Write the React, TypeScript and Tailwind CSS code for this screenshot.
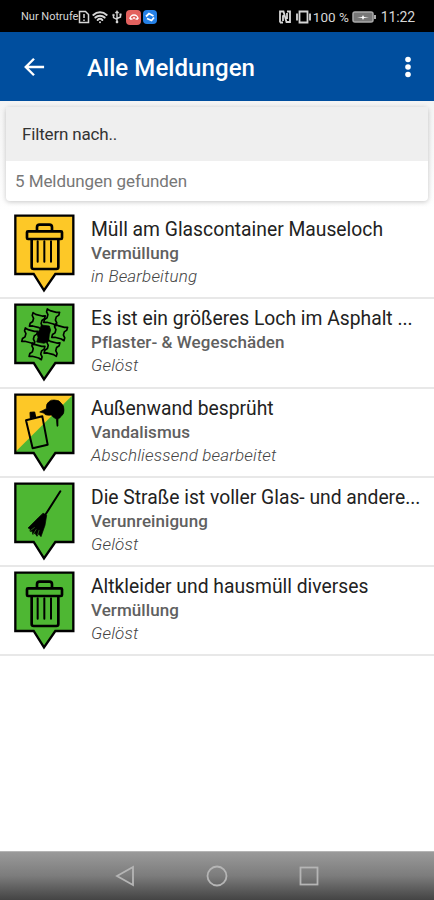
import React from 'react';
import { Wifi } from 'lucide-react';

type IconName = 'bin' | 'paving' | 'spray' | 'broom';
type Status = 'open' | 'done' | 'closing';

interface Report {
  title: string;
  category: string;
  state: string;
  icon: IconName;
  status: Status;
}

const reports: Report[] = [
  { title: 'Müll am Glascontainer Mauseloch', category: 'Vermüllung', state: 'in Bearbeitung', icon: 'bin', status: 'open' },
  { title: 'Es ist ein größeres Loch im Asphalt ...', category: 'Pflaster- & Wegeschäden', state: 'Gelöst', icon: 'paving', status: 'done' },
  { title: 'Außenwand besprüht', category: 'Vandalismus', state: 'Abschliessend bearbeitet', icon: 'spray', status: 'closing' },
  { title: 'Die Straße ist voller Glas- und andere...', category: 'Verunreinigung', state: 'Gelöst', icon: 'broom', status: 'done' },
  { title: 'Altkleider und hausmüll diverses', category: 'Vermüllung', state: 'Gelöst', icon: 'bin', status: 'done' },
];

const YELLOW = '#fdc827';
const GREEN = '#4eb733';

const Bin: React.FC = () => (
  <g fill="none" stroke="#000" strokeLinejoin="round" strokeLinecap="round">
    <path d="M111 75V67q0-8 8-8h29q8 0 8 8v8" strokeWidth="8" />
    <rect x="81" y="79" width="105" height="23" rx="3" strokeWidth="8" />
    <path d="M95 104v82q0 6 6 6h68q6 0 6-6v-82" strokeWidth="8" />
    <path d="M113 109v61M133 109v61M153 109v61" strokeWidth="6" />
  </g>
);

const stones = [
  [155, 70],
  [112, 81],
  [179, 115],
  [89, 127],
  [156, 162],
  [111, 172],
];

const Paving: React.FC = () => (
  <g stroke="#000" strokeWidth="5" strokeLinejoin="round">
    <path d="M124 93l24 3 4 12-4 14-2 20-14 6-22-4 4-14-3-11 9-14z" fill="#000" strokeWidth="2" />
    {stones.map(([x, y]) => (
      <path
        key={`${x}-${y}`}
        transform={`translate(${x} ${y}) rotate(15)`}
        d="M-19-21L-10-18H10L19-21V-12L13-5V5L19 12V21L10 18H-10L-19 21V12L-13 5V-5L-19-12z"
        fill="none"
      />
    ))}
  </g>
);

const Spray: React.FC = () => (
  <g stroke="#000" strokeLinejoin="round">
    <path d="M78 109l49-12 16 85-45 11z" fill="none" strokeWidth="6" />
    <path d="M91 103l-1-18 14-1 3 15z" strokeWidth="3" />
    <path
      d="M119 84l20-10q-1-16 8-21 5-6 16-5 16 0 20 9 10 8 9 21 1 12-8 18-5 8-10 9l0 21-3 1-2-22q-10-4-15-12-18 3-23-6z"
      strokeWidth="2"
    />
  </g>
);

const Broom: React.FC = () => (
  <g stroke="#000" strokeLinecap="round" strokeLinejoin="round">
    <path d="M181 55l-46 72" strokeWidth="6" />
    <path d="M130 121l10 6-5 30-12 34-7-8-5 7-6-9-7 3-1-9-7 0 0-8-6-2 30-30z" strokeWidth="2" />
    <path d="M103 164l-11 8M108 170l-8 13M117 172l-4 13" stroke={GREEN} strokeWidth="1.5" />
  </g>
);

const drawings: Record<IconName, React.FC> = { bin: Bin, paving: Paving, spray: Spray, broom: Broom };

const Marker: React.FC<{ icon: IconName; status: Status }> = ({ icon, status }) => {
  const Drawing = drawings[icon];
  const outline = 'M46 32H220V207H166L132 256 101 207H46Z';

  return (
    <svg viewBox="42 27 183 240" className="h-20 w-[61px] shrink-0">
      <path d={outline} fill={status === 'open' ? YELLOW : GREEN} />
      {status === 'closing' && <path d="M46 32H219L46 204Z" fill={YELLOW} />}
      <path d={outline} fill="none" stroke="#000" strokeWidth="7" />
      <Drawing />
    </svg>
  );
};

const StatusBar: React.FC = () => (
  <div className="flex h-8 shrink-0 items-center justify-between bg-black pt-0.5 pr-[19px] pl-[21px] text-[#d6d6d6]">
    <div className="flex items-center">
      <span className="text-[11px]">Nur Notrufe</span>
      <svg viewBox="0 0 12 14" className="h-3.5 w-3" fill="none" stroke="currentColor" strokeWidth="1.5">
        <path d="M1.5 1.5h6l3 3v8h-9zM6 4v4M6 9.500v1.500" />
      </svg>
      <Wifi className="ml-0.5 size-4" strokeWidth={3} />
      <svg viewBox="0 0 12 14" className="ml-[3px] h-3.5 w-3" fill="none" stroke="currentColor" strokeWidth="1.4">
        <path d="M6 2v9M2.500 5v2.500L6 9.500M9.500 4.500V7L6 8.500" />
        <path d="M6 .5 8 3H4zM5 11h2v2H5zM1.700 4.200h1.600v1.600H1.700zM8.700 3.700h1.600v1.600H8.700z" fill="currentColor" strokeWidth=".4" />
      </svg>
      <span className="ml-[3px] flex size-[15px] items-center justify-center rounded bg-[#e3625f]">
        <svg viewBox="0 0 12 12" className="size-3" fill="none" stroke="#fff" strokeWidth="1.500">
          <path d="M2 8a4 4 0 1 1 8 0M2 8h2.500M7.500 8H10M6 6v2" />
        </svg>
      </span>
      <span className="ml-0.5 flex size-3.5 items-center justify-center rounded bg-[#2580e6]">
        <svg viewBox="0 0 12 12" className="size-3" fill="none" stroke="#fff" strokeWidth="1.800">
          <path d="M2 5.500 5 2.500l4.500 2.500M10 6.500 7.500 9.500 3 7.500" />
        </svg>
      </span>
    </div>
    <div className="flex items-center">
      <svg viewBox="0 0 14 14" className="h-3.5 w-3.5" fill="none" stroke="currentColor" strokeWidth="1.800">
        <path d="M2 12.500V1.500h3.500L8.500 12h3.500V1.500H9M2 12.500h3M5 11V6l2-1M9 9V3" />
      </svg>
      <svg viewBox="0 0 17 14" className="ml-[3px] h-3.5 w-[17px]" fill="none" stroke="currentColor" strokeWidth="1.800">
        <path d="M4.500 1.500h8v11h-8zM2 3.500v7M15 3.500v7" />
      </svg>
      <span className="ml-px text-[13.500px] whitespace-nowrap">100 %</span>
      <svg viewBox="0 0 25 12" className="ml-[3px] h-3 w-[25px]">
        <rect x="1" y="1" width="20" height="10" rx="2" fill="#777" stroke="#aaa" strokeWidth="1.500" />
        <path d="M23 4v4" stroke="#aaa" strokeWidth="2" />
        <path d="M5 6h5l1-2 1 2h5l-5 1-1 2-1-2z" fill="#fff" />
      </svg>
      <span className="ml-1 text-sm tracking-[-0.01em]">11:22</span>
    </div>
  </div>
);

const AppBar: React.FC = () => (
  <header className="flex h-[69px] shrink-0 items-center bg-[#004e9e] pr-[19px] pl-[23px] text-white">
    <svg viewBox="0 0 24 24" className="size-[22px]" fill="none" stroke="currentColor" strokeWidth="2.600">
      <path d="M23 12H3.500M12 3 3 12l9 9" />
    </svg>
    <h1 className="ml-[42px] flex-1 pt-0.5 text-2xl font-medium tracking-[0.003em]">Alle Meldungen</h1>
    <svg viewBox="0 0 14 24" className="h-6 w-3.5" fill="currentColor">
      <circle cx="7" cy="4.500" r="2.800" />
      <circle cx="7" cy="12" r="2.800" />
      <circle cx="7" cy="19.500" r="2.800" />
    </svg>
  </header>
);

const ReportRow: React.FC<{ report: Report }> = ({ report }) => (
  <li className="flex h-[89.3px] border-b-2 border-[#e8e8e8] pt-1 pl-3.5">
    <Marker icon={report.icon} status={report.status} />
    <div className="ml-4 flex min-w-0 flex-col whitespace-nowrap">
      <span className="pt-[3px] text-[19.3px] leading-[25px] text-[#222]">{report.title}</span>
      <span className="text-[17px] leading-[22px] font-medium tracking-[0.004em] text-[#606060]">{report.category}</span>
      <span className="text-[17px] leading-6 font-light tracking-[0.01em] text-[#444] italic">{report.state}</span>
    </div>
  </li>
);

const NavBar: React.FC = () => (
  <nav className="flex h-[49px] shrink-0 items-center justify-center gap-[70px] border-t border-[#b5b5b5] bg-linear-to-b from-[#9a9a9a] via-[#7c7c7c] to-[#444] text-[#b5b5b5]">
    <svg viewBox="0 0 22 22" className="size-[22px]" fill="none" stroke="currentColor" strokeWidth="1.800">
      <path d="M19 2v18L3 11z" />
    </svg>
    <svg viewBox="0 0 22 22" className="size-[22px]" fill="none" stroke="currentColor" strokeWidth="1.800">
      <circle cx="11" cy="11" r="9.500" />
    </svg>
    <svg viewBox="0 0 22 22" className="size-[22px]" fill="none" stroke="currentColor" strokeWidth="1.800">
      <rect x="2.500" y="2.500" width="17" height="17" />
    </svg>
  </nav>
);

const App: React.FC = () => {
  return (
    <div className="flex h-[900px] w-[434px] flex-col overflow-hidden bg-white font-[Roboto,sans-serif]">
      <StatusBar />
      <AppBar />

      {/* Filter */}
      <div className="h-[109px] shrink-0 bg-linear-to-b from-[#f4f4f4] via-[#f8f8f8] to-white px-1.5 pt-1.5">
        <div className="h-[94px] rounded-sm bg-white shadow-[0_1px_5px_rgba(0,0,0,0.22)]">
          <div className="flex h-[54px] items-center bg-[#efefef] pt-0.5 pl-4 text-[17px] tracking-[-0.01em] text-[#333]">Filtern nach..</div>
          <div className="flex h-10 items-center pt-0.5 pl-[9px] text-[17px] tracking-[-0.004em] text-[#777]">5 Meldungen gefunden</div>
        </div>
      </div>

      <ul className="flex-1">
        {reports.map((report) => (
          <ReportRow key={report.title} report={report} />
        ))}
      </ul>

      <NavBar />
    </div>
  );
};

export default App;
